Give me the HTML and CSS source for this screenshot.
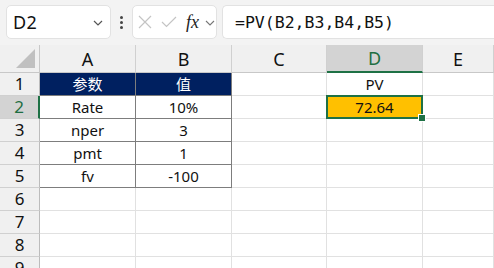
FILE: index.html
```html
<!DOCTYPE html>
<html>
<head>
<meta charset="utf-8">
<link rel="stylesheet" href="styles.css">
</head>
<body>
<div class="toolbar">
  <div class="namebox">
    <span class="name">D2</span>
    <svg class="chev" width="10" height="6" viewBox="0 0 10 6"><path d="M1 1 L5 5 L9 1" fill="none" stroke="#555" stroke-width="1.2"/></svg>
  </div>
  <div class="dots"><i></i><i></i><i></i></div>
  <div class="fxbox">
    <svg width="14" height="14" viewBox="0 0 14 14"><path d="M1 1 L13 13 M13 1 L1 13" stroke="#c4c4c4" stroke-width="1.2" fill="none"/></svg>
    <svg width="16" height="12" viewBox="0 0 16 12"><path d="M1 6 L5.5 10.5 L15 1" stroke="#c4c4c4" stroke-width="1.2" fill="none"/></svg>
    <span class="fx">fx</span>
    <svg class="chev2" width="10" height="6" viewBox="0 0 10 6"><path d="M1 1 L5 5 L9 1" fill="none" stroke="#777" stroke-width="1.1"/></svg>
  </div>
  <div class="formula">=PV(B2,B3,B4,B5)</div>
</div>
<div class="sheet">
  <div class="corner"><span class="tri"></span></div>
  <div class="ch">A</div>
  <div class="ch">B</div>
  <div class="ch">C</div>
  <div class="ch sel">D</div>
  <div class="ch">E</div>

  <div class="rh">1</div>
  <div class="c t head">参数</div>
  <div class="c t head">值</div>
  <div class="c"></div>
  <div class="c">PV</div>
  <div class="c"></div>

  <div class="rh sel">2</div>
  <div class="c t">Rate</div>
  <div class="c t">10%</div>
  <div class="c"></div>
  <div class="c active">72.64</div>
  <div class="c"></div>

  <div class="rh">3</div>
  <div class="c t">nper</div>
  <div class="c t">3</div>
  <div class="c"></div>
  <div class="c"></div>
  <div class="c"></div>

  <div class="rh">4</div>
  <div class="c t">pmt</div>
  <div class="c t">1</div>
  <div class="c"></div>
  <div class="c"></div>
  <div class="c"></div>

  <div class="rh">5</div>
  <div class="c t">fv</div>
  <div class="c t">-100</div>
  <div class="c"></div>
  <div class="c"></div>
  <div class="c"></div>

  <div class="rh">6</div>
  <div class="c"></div><div class="c"></div><div class="c"></div><div class="c"></div><div class="c"></div>
  <div class="rh">7</div>
  <div class="c"></div><div class="c"></div><div class="c"></div><div class="c"></div><div class="c"></div>
  <div class="rh">8</div>
  <div class="c"></div><div class="c"></div><div class="c"></div><div class="c"></div><div class="c"></div>
  <div class="rh">9</div>
  <div class="c"></div><div class="c"></div><div class="c"></div><div class="c"></div><div class="c"></div>
</div>
</body>
</html>
```
FILE: styles.css
```css
* { box-sizing: border-box; }
html, body {
  margin: 0;
  padding: 0;
  width: 494px;
  height: 268px;
  overflow: hidden;
  background: #ffffff;
  font-family: "Noto Sans", "Noto Sans CJK SC", sans-serif;
}
.toolbar {
  height: 45px;
  background: #f3f3f3;
  display: flex;
  align-items: flex-start;
  padding: 5px 0 0 6px;
  gap: 0;
}
.namebox {
  width: 105px;
  height: 34px;
  background: #fff;
  border: 1px solid #e2e2e2;
  border-radius: 5px;
  display: flex;
  align-items: center;
  justify-content: space-between;
  padding: 0 7px 0 6px;
}
.name {
  font-size: 18px;
  color: #111;
  letter-spacing: 0.3px;
}
.chev { margin-top: 2px; }
.dots {
  width: 21px;
  height: 34px;
  display: flex;
  flex-direction: column;
  align-items: center;
  justify-content: center;
  gap: 2px;
}
.dots i {
  display: block;
  width: 3px;
  height: 3px;
  background: #444;
  border-radius: 50%;
}
.fxbox {
  width: 85px;
  height: 34px;
  background: #fff;
  border: 1px solid #e2e2e2;
  border-radius: 5px;
  display: flex;
  align-items: center;
  padding: 0 0 0 5px;
  gap: 9px;
}
.fx {
  font-family: "Liberation Serif", serif;
  font-style: italic;
  font-size: 18px;
  color: #222;
  letter-spacing: 0px;
}
.chev2 { margin-left: -3px; margin-top: 2px; }
.formula {
  margin-left: 5px;
  flex: 1;
  height: 34px;
  background: #fff;
  border: 1px solid #e2e2e2;
  border-right: none;
  border-radius: 5px 0 0 5px;
  font-family: "DejaVu Sans Mono", "Liberation Mono", monospace;
  font-size: 16.5px;
  color: #111;
  display: flex;
  align-items: center;
  padding-left: 12px;
}
.sheet {
  display: grid;
  grid-template-columns: 40px 96px 96px 95px 96px 1fr;
  grid-template-rows: 28px repeat(9, 23px);
}
.corner {
  background: #f0f0f0;
  border-right: 1px solid #c8c8c8;
  border-bottom: 1px solid #c8c8c8;
  position: relative;
}
.tri {
  position: absolute;
  right: 4px;
  bottom: 4px;
  width: 0;
  height: 0;
  border-left: 19px solid transparent;
  border-bottom: 19px solid #c0c0c0;
}
.ch {
  background: #f0f0f0;
  border-right: 1px solid #d0d0d0;
  border-bottom: 1px solid #c8c8c8;
  display: flex;
  align-items: center;
  justify-content: center;
  font-size: 18px;
  color: #111;
}
.ch.sel {
  background: #d3d3d3;
  color: #1e6e42;
  border-bottom: 2px solid #1e7145;
}
.rh {
  background: #f0f0f0;
  border-right: 1px solid #bcbcbc;
  border-bottom: 1px solid #d0d0d0;
  display: flex;
  align-items: center;
  justify-content: center;
  font-size: 17px;
  color: #111;
  padding-bottom: 1px;
}
.rh.sel {
  background: #d3d3d3;
  color: #1e6e42;
  border-right: 2px solid #1e7145;
}
.c {
  border-right: 1px solid #e1e1e1;
  border-bottom: 1px solid #e1e1e1;
  display: flex;
  align-items: center;
  justify-content: center;
  font-size: 15px;
  color: #111;
  padding-bottom: 1px;
}
.c.t {
  border-right: 1px solid #7d7d7d;
  border-bottom: 1px solid #7d7d7d;
}
.c.head {
  background: #002060;
  color: #ffffff;
}
.c.active {
  background: #ffc000;
  position: relative;
}
.c.active::after {
  content: "";
  position: absolute;
  left: -1px;
  top: -1px;
  right: -1px;
  bottom: -1px;
  border: 2px solid #1e7145;
}
.c.active::before {
  content: "";
  position: absolute;
  right: -4px;
  bottom: -4px;
  width: 6px;
  height: 6px;
  background: #1e7145;
  border: 1px solid #fff;
  z-index: 2;
}
```
